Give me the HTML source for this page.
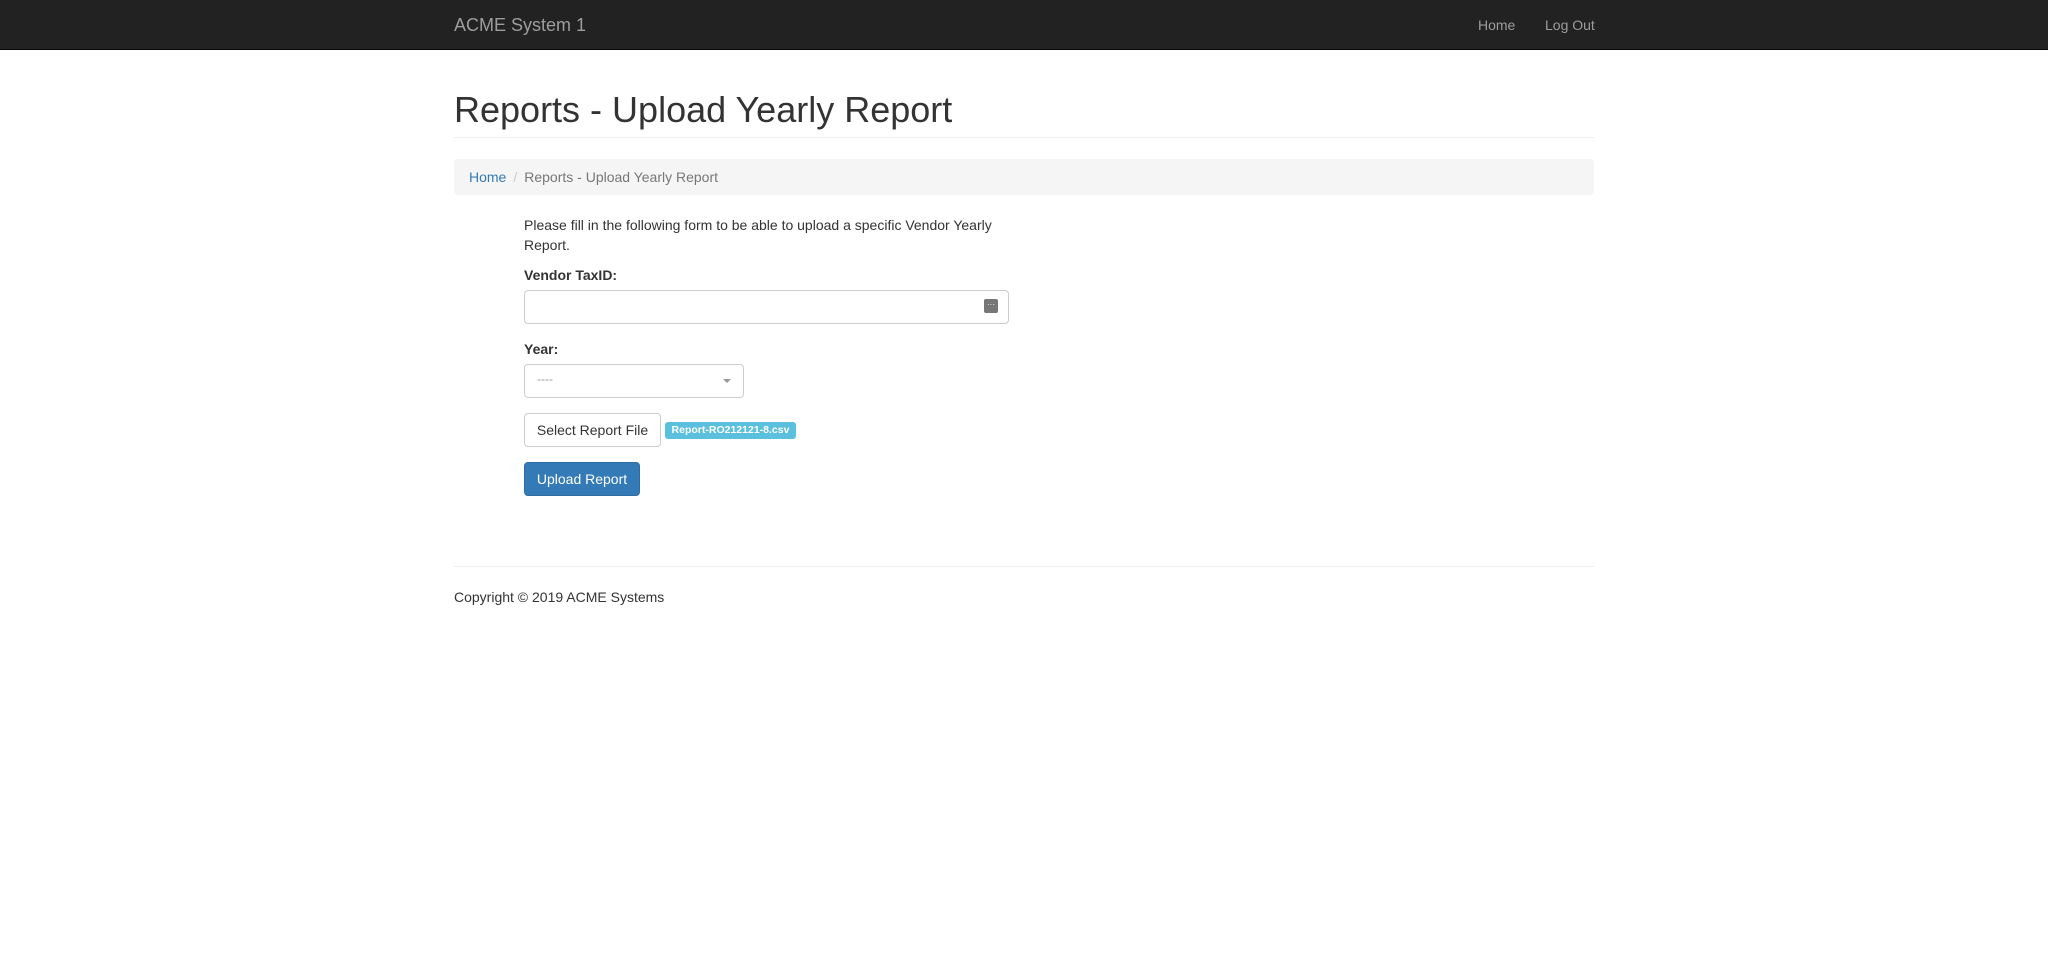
<!DOCTYPE html>
<html><head><meta charset="utf-8"><style>
*{box-sizing:border-box;margin:0;padding:0}
body{width:2048px;height:960px;background:#fff;font-family:"Liberation Sans",Arial,sans-serif;font-size:14px;color:#333;position:relative;overflow:hidden}
.nav{position:absolute;left:0;top:0;width:2048px;height:50px;background:#222;border-bottom:1px solid #080808}
.a{position:absolute;white-space:nowrap}
.brand{left:454px;top:15px;font-size:18px;color:#9d9d9d;line-height:20px}
.nl{top:15px;color:#9d9d9d;line-height:20px}
h1{position:absolute;left:454px;top:90px;font-size:36px;font-weight:500;line-height:40px;color:#333}
.hr{position:absolute;left:454px;width:1140px;height:1px;background:#eee}
.bc{position:absolute;left:454px;top:159px;width:1140px;height:36px;background:#f5f5f5;border-radius:4px;padding:8px 15px;line-height:20px}
.bc a{color:#337ab7}
.sep{color:#ccc;padding:0 7px}
.box{position:absolute;border:1px solid #ccc;border-radius:4px;background:#fff}
label{position:absolute;font-weight:bold;line-height:20px}
</style></head><body>
<div class="nav"></div>
<div class="a brand">ACME System 1</div>
<div class="a nl" style="left:1478px">Home</div>
<div class="a nl" style="left:1545px">Log Out</div>
<h1>Reports - Upload Yearly Report</h1>
<div class="hr" style="top:137px"></div>
<div class="bc"><a>Home</a><span class="sep">/</span><span style="color:#777">Reports - Upload Yearly Report</span></div>
<div class="a" style="left:524px;top:215px;line-height:20px">Please fill in the following form to be able to upload a specific Vendor Yearly<br>Report.</div>
<label style="left:524px;top:265px">Vendor TaxID:</label>
<div class="box" style="left:524px;top:290px;width:485px;height:34px"><div style="position:absolute;right:10px;top:8px;width:14px;height:14px;background:#777;border-radius:2px;color:#fff;font-size:8px;line-height:12px;text-align:center">···</div></div>
<label style="left:524px;top:339px">Year:</label>
<div class="box" style="left:524px;top:364px;width:220px;height:34px"><span style="position:absolute;left:12px;top:7px;color:#999;font-size:12px">----</span><span style="position:absolute;right:12px;top:14px;border-left:4px solid transparent;border-right:4px solid transparent;border-top:4px solid #999"></span></div>
<div class="box" style="left:524px;top:413px;width:137px;height:34px;text-align:center;line-height:32px">Select Report File</div>
<div class="a" style="left:665px;top:422px;width:131px;height:17px;background:#5bc0de;border-radius:3px;color:#fff;font-size:10.5px;font-weight:bold;line-height:17px;text-align:center">Report-RO212121-8.csv</div>
<div class="a" style="left:524px;top:462px;width:116px;height:34px;background:#337ab7;border:1px solid #2e6da4;border-radius:4px;color:#fff;text-align:center;line-height:32px">Upload Report</div>
<div class="hr" style="top:566px"></div>
<div class="a" style="left:454px;top:587px;line-height:20px">Copyright © 2019 ACME Systems</div>
</body></html>
